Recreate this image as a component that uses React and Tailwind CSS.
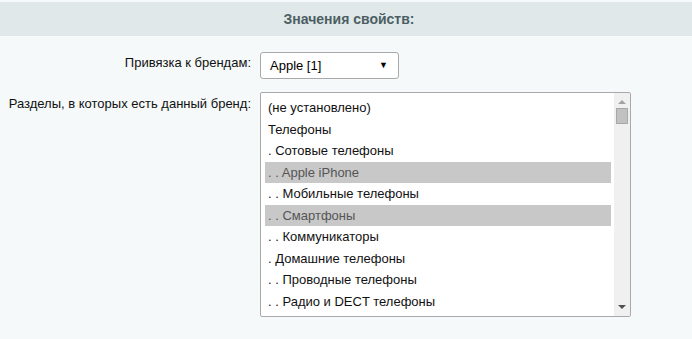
import React from 'react';

const items = [
  { label: '(не установлено)' },
  { label: 'Телефоны' },
  { label: '. Сотовые телефоны' },
  { label: '. . Apple iPhone', selected: true },
  { label: '. . Мобильные телефоны' },
  { label: '. . Смартфоны', selected: true },
  { label: '. . Коммуникаторы' },
  { label: '. Домашние телефоны' },
  { label: '. . Проводные телефоны' },
  { label: '. . Радио и DECT телефоны' },
];

const App = () => {
  return (
    <div
      className="w-[692px] h-[339px] bg-[#f5f9f9] pt-[2px] text-[13px] text-[#000]"
      style={{ fontFamily: '"Liberation Sans", Arial, sans-serif' }}
    >
      {/* Header */}
      <div className="h-[34px] bg-[#e0e8ea] flex items-center justify-center">
        <span className="font-bold text-[#4b5f63] text-[14px] pl-[6px]">Значения свойств:</span>
      </div>

      {/* Form */}
      <div className="grid grid-cols-[260px_1fr] gap-y-[13px] pt-[16px]">
        <div className="text-right pr-[9px] pt-[1px] text-[#111]">Привязка к брендам:</div>
        <div>
          <div className="w-[139px] h-[27px] bg-white border border-[#a9a9a9] rounded-[3px] flex items-center justify-between pl-[9px] pr-[10px]">
            <span>Apple [1]</span>
            <span className="text-[9px] leading-none">▼</span>
          </div>
        </div>

        <div className="text-right pr-[9px] pt-[2px] text-[#111]">Разделы, в которых есть данный бренд:</div>
        <div>
          <div className="w-[371px] h-[225px] bg-white border border-[#a9a9a9] rounded-[2px] flex overflow-hidden">
            <div className="flex-1 pt-[4px] pl-[4px] pr-[3px] overflow-hidden">
              {items.map((item, i) => (
                <div
                  key={i}
                  className={`h-[21.5px] flex items-center pl-[3px] whitespace-nowrap ${
                    item.selected ? 'bg-[#c8c8c8] text-[#555]' : 'text-[#111]'
                  }`}
                >
                  {item.label}
                </div>
              ))}
            </div>
            {/* Scrollbar */}
            <div className="w-[16px] bg-[#f0f0f0] flex flex-col items-center">
              <svg width="8" height="5" viewBox="0 0 8 5" className="mt-[6px]">
                <path d="M0 5 L4 1 L8 5 Z" fill="#a3a3a3" />
              </svg>
              <div className="w-[12px] h-[16px] bg-[#c1c1c1] border border-[#a8a8a8] mt-[4px]" />
              <div className="flex-1" />
              <svg width="8" height="5" viewBox="0 0 8 5" className="mb-[6px]">
                <path d="M0 0 L8 0 L4 4 Z" fill="#505050" />
              </svg>
            </div>
          </div>
        </div>
      </div>
    </div>
  );
};

export default App;
